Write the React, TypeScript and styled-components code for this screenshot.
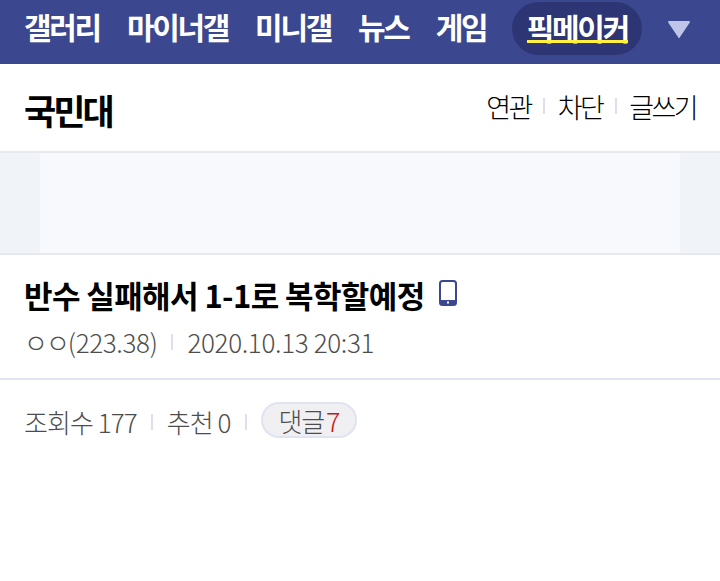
import React from "react";
import styled, { createGlobalStyle } from "styled-components";

const Global = createGlobalStyle`
  html, body { margin: 0; padding: 0; background: #fff; }
  body { font-family: "Noto Sans CJK KR", "Noto Sans", sans-serif; }
`;
const Page = styled.div`width: 720px; height: 581px; overflow: hidden; background: #fff;`;
const Nav = styled.nav`
  height: 64px; background: #3b4890; display: flex; align-items: center;
  padding: 0 0 0 24px; box-sizing: border-box;
`;
const NavItem = styled.a`
  font-size: 30px; font-weight: 700; letter-spacing: -2.3px; color: #fff; line-height: 1;
  margin-right: 27px; white-space: nowrap; position: relative; top: -6px;
`;
const Pick = styled.span`
  background: #2d3574; height: 53px; border-radius: 27px; display: flex; align-items: center;
  padding: 0 14px 0 15px; margin-left: -1.5px; margin-top: -7px; box-sizing: border-box;
`;
const PickText = styled.span`
  position: relative; display: block;
  font-size: 30px; font-weight: 700; letter-spacing: -2.3px; color: #fff; line-height: 31px;
  height: 31px; white-space: nowrap; margin-top: -2px;
  &::after {
    content: ""; position: absolute; left: 0; right: 0; top: 28px; height: 3px; background: #fff03c;
  }
`;
const Arrow = styled.svg`margin-left: 25px; margin-top: -6px; width: 24px; height: 20px;`;
const TitleBar = styled.header`
  height: 89px; display: flex; align-items: center; justify-content: space-between;
  padding: 0 24px; box-sizing: border-box; border-bottom: 2px solid #e8e9ee;
`;
const Gall = styled.h1`margin: 0 0 -3px; font-size: 35px; font-weight: 700; letter-spacing: -2.9px; color: #000; line-height: 1;`;
const Actions = styled.div`display: flex; align-items: center; margin-bottom: 3px;`;
const Action = styled.span`font-size: 27px; font-weight: 300; letter-spacing: -2.6px; color: #000; line-height: 1;`;
const Sep = styled.i<{ $m?: number }>`
  display: block; width: 2px; height: 16px; background: #dde0ec; margin: 0 ${p => p.$m ?? 14}px;
`;
const AdBand = styled.div`height: 102px; background: #f0f3f8; display: flex; justify-content: center; border-bottom: 2px solid #e8e9ee; box-sizing: border-box;`;
const AdInner = styled.div`width: 640px; background: #f8f9fc;`;
const Post = styled.section`padding: 18px 24px 0; height: 125px; box-sizing: border-box; border-bottom: 2px solid #e0e3f0;`;
const PostTitle = styled.h2`
  margin: 0; font-size: 31px; font-weight: 700; letter-spacing: -0.6px; color: #000; line-height: 44px;
  display: flex; align-items: center;
`;
const Phone = styled.svg`width: 18px; height: 26px; margin-left: 14px; margin-top: -4px;`;
const Meta = styled.div`display: flex; align-items: center; margin-top: 8px; height: 34px;`;
const MetaText = styled.span`font-size: 26px; font-weight: 300; letter-spacing: -0.35px; color: #4d4d4d; line-height: 1;`;
const Nick = styled.span`letter-spacing: -2px;`;
const StatText = styled.span`font-size: 26px; font-weight: 300; letter-spacing: -0.93px; color: #4d4d4d; line-height: 1;`;
const Stats = styled.div`display: flex; align-items: center; padding: 26px 24px 0;`;
const Pill = styled.span`
  display: inline-flex; align-items: center; height: 36px; padding: 0 16px; box-sizing: border-box;
  border: 2px solid #e0e3f0; border-radius: 18px; background: #f0f0f3; margin-top: -4px;
  font-size: 26px; font-weight: 300; letter-spacing: -1.2px; color: #4d4d4d;
`;
const Count = styled.em`font-style: normal; color: #c8141e; margin-left: 2px; font-size: 27px;`;

export default function App() {
  return (
    <Page>
      <Global />
      <Nav>
        {["갤러리", "마이너갤", "미니갤", "뉴스", "게임"].map(t => <NavItem key={t}>{t}</NavItem>)}
        <Pick><PickText>픽메이커</PickText></Pick>
        <Arrow viewBox="0 0 24 20"><path d="M2 2h20a1 1 0 0 1 .8 1.5L13 18a1 1 0 0 1-2 0L1.2 3.5A1 1 0 0 1 2 2z" fill="#bfc5e8" /></Arrow>
      </Nav>
      <TitleBar>
        <Gall>국민대</Gall>
        <Actions>
          <Action>연관</Action><Sep $m={12.5} /><Action>차단</Action><Sep $m={12.5} /><Action>글쓰기</Action>
        </Actions>
      </TitleBar>
      <AdBand><AdInner /></AdBand>
      <Post>
        <PostTitle>반수 실패해서 1-1로 복학할예정
          <Phone viewBox="0 0 18 26"><rect x="1" y="1" width="16" height="24" rx="2.5" fill="#fff" stroke="#3b4890" strokeWidth="2" /><path d="M1 20h16v3a2 2 0 0 1-2 2H3a2 2 0 0 1-2-2z" fill="#3b4890" /><rect x="8" y="21.5" width="2" height="2" fill="#fff" /></Phone>
        </PostTitle>
        <Meta>
          <MetaText><Nick>ㅇㅇ</Nick>(223.38)</MetaText><Sep $m={14} /><MetaText>2020.10.13 20:31</MetaText>
        </Meta>
      </Post>
      <Stats>
        <StatText>조회수 177</StatText><Sep /><StatText>추천 0</StatText><Sep />
        <Pill>댓글<Count>7</Count></Pill>
      </Stats>
    </Page>
  );
}
